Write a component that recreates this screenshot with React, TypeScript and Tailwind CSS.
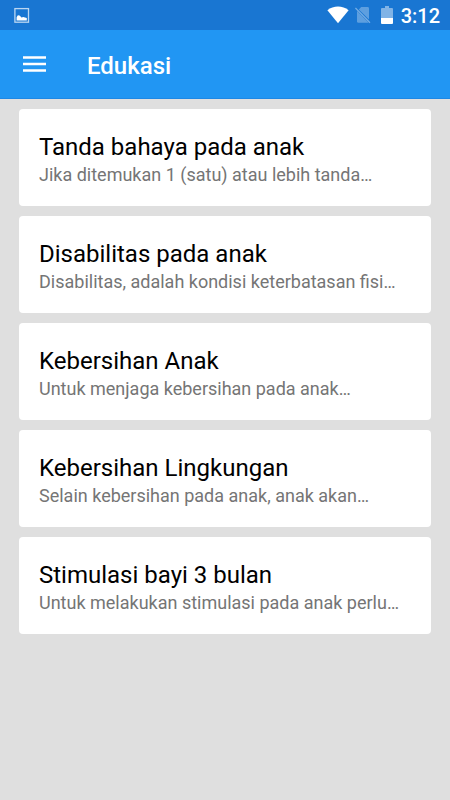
const articles = [
  { title: 'Tanda bahaya pada anak', excerpt: 'Jika ditemukan 1 (satu) atau lebih tanda…' },
  { title: 'Disabilitas pada anak', excerpt: 'Disabilitas, adalah kondisi keterbatasan fisi…' },
  { title: 'Kebersihan Anak', excerpt: 'Untuk menjaga kebersihan pada anak…' },
  { title: 'Kebersihan Lingkungan', excerpt: 'Selain kebersihan pada anak, anak akan…' },
  { title: 'Stimulasi bayi 3 bulan', excerpt: 'Untuk melakukan stimulasi pada anak perlu…' },
];

const StatusBar = () => {
  return (
    <div className="flex h-[30px] items-center justify-between bg-[#1976d2] pl-3.5 pr-2.5 text-white">
      <svg className="h-4 w-4" viewBox="0 0 16 16" fill="none">
        <rect x="0.9" y="1.6" width="13.6" height="13.6" stroke="#fff" strokeOpacity="0.7" strokeWidth="1.3" />
        <path d="M2.6 13.4V10.2L3.6 8.6 5 8.2 6.4 9.2 7.4 10.4 9.4 9.9 11 10.6 12.8 11V13.4Z" fill="#fff" />
      </svg>
      <div className="flex items-center">
        <svg className="h-[18px] w-[22px]" viewBox="0 0 22 18">
          <path d="M0.4 4.2C6.4 -0.6 15.6 -0.6 21.6 4.2L11 17.2Z" fill="#fff" />
        </svg>
        <svg className="ml-1.5 h-[18px] w-4" viewBox="0 0 16 18">
          <path d="M6.2 1H12.6a1.4 1.4 0 0 1 1.4 1.4V13.4L3.8 3.4Z" fill="#fff" fillOpacity="0.3" />
          <path d="M2 5L13.6 16.8H3.4A1.4 1.4 0 0 1 2 15.4Z" fill="#fff" fillOpacity="0.3" />
          <path d="M0.4 2L15 16.8" stroke="#fff" strokeOpacity="0.4" strokeWidth="1.3" />
        </svg>
        <svg className="ml-2.5 h-[18px] w-3" viewBox="0 0 12 18">
          <path d="M4 0H8V2H11A1 1 0 0 1 12 3V12H0V3A1 1 0 0 1 1 2H4Z" fill="#fff" fillOpacity="0.45" />
          <path d="M0 12H12V17A1 1 0 0 1 11 18H1A1 1 0 0 1 0 17Z" fill="#fff" />
        </svg>
        <span className="ml-2 pt-px text-xl leading-6 font-medium">3:12</span>
      </div>
    </div>
  );
};

const Header = () => {
  return (
    <header className="flex h-[69px] items-center border-b border-[#1e88e5] bg-[#2196f3] px-[22px] text-white">
      <button type="button" aria-label="Menu">
        <svg className="block h-4 w-6" viewBox="0 0 24 16">
          <path d="M1 1.5H24M1 8H24M1 14.5H24" stroke="#fff" strokeWidth="2.4" />
        </svg>
      </button>
      <h1 className="ml-[41px] pt-1 text-2xl font-medium">Edukasi</h1>
    </header>
  );
};

export default function App() {
  return (
    <div className="min-h-screen bg-[#dfdfdf] font-['Roboto',sans-serif]">
      <StatusBar />
      <Header />
      <main className="flex flex-col gap-2.5 px-[19px] py-2.5">
        {articles.map((article) => (
          <article key={article.title} className="rounded-sm bg-white px-5 pt-[23px] pb-[19px]">
            <h2 className="truncate text-2xl leading-[30px] text-black">{article.title}</h2>
            <p className="truncate text-lg leading-[25px] text-[#757575]">{article.excerpt}</p>
          </article>
        ))}
      </main>
    </div>
  );
}
